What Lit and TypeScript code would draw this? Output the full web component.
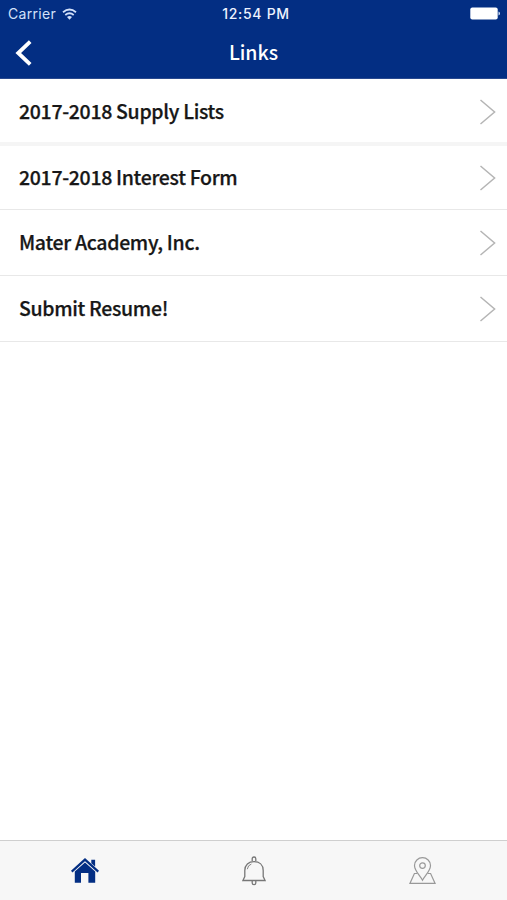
import { LitElement, html, css, svg } from "lit";
import { customElement } from "lit/decorators.js";

interface LinkRow {
  label: string;
  cls: string;
}

const LINKS: LinkRow[] = [
  { label: "2017-2018 Supply Lists", cls: "row first" },
  { label: "2017-2018 Interest Form", cls: "row second" },
  { label: "Mater Academy, Inc.", cls: "row" },
  { label: "Submit Resume!", cls: "row" },
];

const wifi = svg`
  <path d="M1 4.2Q7.5 -1.2 14 4.2M3.3 7Q7.5 3.6 11.7 7" fill="none" stroke="currentColor" stroke-width="1.8"/>
  <path d="M5 9Q7.5 7 10 9L7.5 11.8Z" fill="currentColor"/>`;

const home = svg`
  <path d="M0.7 13.6L14 1.6L27.3 13.6" fill="none" stroke="currentColor" stroke-width="2.2"/>
  <path d="M20.3 1.8H24.1V8.6L20.3 5.2Z" fill="currentColor"/>
  <path d="M3.8 13.6L14 4.6L24.2 13.6V24.8H17.4V15H10V24.8H3.8Z" fill="currentColor"/>`;

const bell = svg`
  <g fill="none" stroke="currentColor" stroke-width="1.3">
    <path d="M10.2 5V2.7Q10.2 1 12 1T13.8 2.7V5"/>
    <path d="M2.8 20.5V14.5C2.8 8.8 6.6 5.6 12 5.6S21.2 8.8 21.2 14.5V20.5L23.1 24.5H0.9Z"/>
    <path d="M5.3 13.2Q5.8 9.2 9.4 8" stroke-width="0.9"/>
    <path d="M10.2 25V27Q10.2 28.7 12 28.7T13.8 27V25"/>
  </g>`;

const pin = svg`
  <g fill="none" stroke="currentColor" stroke-width="1.2">
    <path d="M13.5 23.2C11.2 18.8 5.5 13.8 5.5 8.4A8 7.7 0 0 1 21.5 8.4C21.5 13.8 15.8 18.8 13.5 23.2Z"/>
    <circle cx="13.5" cy="8.6" r="2.8"/>
    <path d="M8.2 16.5H5.4L0.9 26.4H26.1L21.6 16.5H18.8"/>
  </g>`;

@customElement("app-root")
export class AppRoot extends LitElement {
  static styles = css`
    :host {
      display: flex;
      flex-direction: column;
      height: 100vh;
      background: #fff;
      font-family: "Noto Sans CJK JP", "Noto Sans CJK SC", sans-serif;
      overflow: hidden;
    }
    svg { display: block; }
    .header {
      height: 79px;
      flex: none;
      box-sizing: border-box;
      background: #032e83;
      border-bottom: 1px solid #29498f;
      color: #fff;
    }
    .status {
      display: grid;
      grid-template-columns: 1fr auto 1fr;
      align-items: center;
      height: 27px;
      padding: 0 7px 0 8px;
      font-family: Inter, sans-serif;
      font-size: 14px;
      line-height: 27px;
    }
    .carrier {
      display: flex;
      align-items: center;
      gap: 6px;
      color: #d3e1fa;
      letter-spacing: 0.3px;
    }
    .clock {
      margin-left: 4px;
      font-weight: 500;
      letter-spacing: 0.7px;
      color: #eef3ff;
    }
    .battery { justify-self: end; }
    .nav {
      display: grid;
      grid-template-columns: 60px 1fr 60px;
      align-items: center;
      height: 51px;
    }
    .back { margin-left: 15px; }
    .title {
      margin: 0;
      padding-bottom: 2px;
      text-align: center;
      font-size: 19.5px;
      line-height: 49px;
      font-weight: 500;
    }
    .list { flex: 1; }
    .row {
      display: flex;
      align-items: center;
      justify-content: space-between;
      box-sizing: border-box;
      height: 66px;
      padding: 0 11px 0 19px;
      border-bottom: 1px solid #e8e8e8;
      color: #171717;
      font-size: 19.5px;
      line-height: 62px;
      letter-spacing: -0.32px;
      font-weight: 500;
      -webkit-text-stroke: 0.25px #171717;
    }
    .label { padding-bottom: 2px; }
    .first { height: 67px; padding-top: 2px; border-bottom: 4px solid #f5f5f5; }
    .second { height: 64px; }
    .tabs {
      display: grid;
      grid-template-columns: repeat(3, 1fr);
      align-items: center;
      justify-items: center;
      flex: none;
      height: 60px;
      box-sizing: border-box;
      background: #f7f7f7;
      border-top: 1px solid #cfcfcf;
      color: #777;
    }
    .active { color: #032e83; }
    .faint { color: #999; }
  `;

  render() {
    return html`
      <header class="header">
        <div class="status">
          <span class="carrier">Carrier
            <svg width="15" height="12" viewBox="0 0 15 12">${wifi}</svg>
          </span>
          <span class="clock">12:54 PM</span>
          <svg class="battery" width="30" height="13" viewBox="0 0 30 13">
            <rect x="0.3" y="0.5" width="27.4" height="12" rx="2" fill="#fff" />
            <path d="M28.5 4.5Q30 5 30 6.5T28.5 8.5Z" fill="#d3e1fa" />
          </svg>
        </div>
        <div class="nav">
          <svg class="back" width="18" height="26" viewBox="0 0 18 26">
            <path d="M15.2 1.6L3.2 13L15.2 24.4" fill="none" stroke="#fff" stroke-width="3.8" />
          </svg>
          <h1 class="title">Links</h1>
        </div>
      </header>
      <main class="list">
        ${LINKS.map(
          (l) => html`<div class=${l.cls}>
            <span class="label">${l.label}</span>
            <svg width="16" height="26" viewBox="0 0 16 26">
              <path d="M0.5 1L14.6 13L0.5 25" fill="none" stroke="#b5b5b5" stroke-width="1.5" />
            </svg>
          </div>`
        )}
      </main>
      <nav class="tabs">
        <svg class="active" width="28" height="26" viewBox="0 0 28 26">${home}</svg>
        <svg width="24" height="30" viewBox="0 0 24 30">${bell}</svg>
        <svg class="faint" width="27" height="28" viewBox="0 0 27 28">${pin}</svg>
      </nav>
    `;
  }
}
